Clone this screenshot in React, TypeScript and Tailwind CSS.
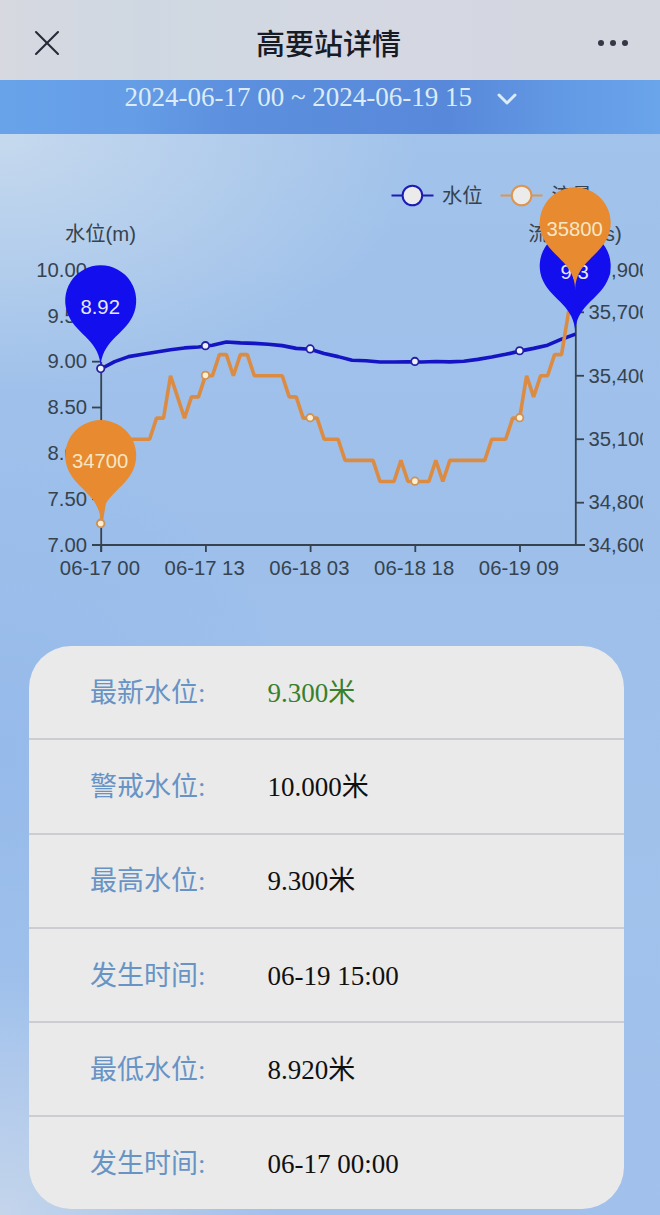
import React from 'react';
import { X, ChevronDown } from 'lucide-react';

// water level (m), one reading every two steps
const LEVELS = [
  8.92, 9.0, 9.055, 9.08, 9.105, 9.13, 9.15, 9.16, 9.18, 9.215, 9.205, 9.2,
  9.19, 9.175, 9.145, 9.135, 9.09, 9.055, 9.015, 9.01, 8.997, 8.997, 8.999, 8.997,
  9.002, 8.998, 9.005, 9.025, 9.05, 9.08, 9.115, 9.145, 9.18, 9.245, 9.3,
];

// flow (m³/s), one reading per step
const FLOWS = [
  34700, 34900, 35000, 35100, 35100, 35100, 35100, 35100, 35200, 35200, 35400, 35300,
  35200, 35300, 35300, 35400, 35400, 35500, 35500, 35400, 35500, 35500, 35400, 35400,
  35400, 35400, 35400, 35300, 35300, 35200, 35200, 35200, 35100, 35100, 35100, 35000,
  35000, 35000, 35000, 35000, 34900, 34900, 34900, 35000, 34900, 34900, 34900, 34900,
  35000, 34900, 35000, 35000, 35000, 35000, 35000, 35000, 35100, 35100, 35100, 35200,
  35200, 35400, 35300, 35400, 35400, 35500, 35500, 35700, 35800,
];

const X_LABELS = ['06-17 00', '06-17 13', '06-18 03', '06-18 18', '06-19 09'];
const LEFT_LABELS = ['7.00', '7.50', '8.00', '8.50', '9.00', '9.50', '10.00'];
const RIGHT_LABELS = [34600, 34800, 35100, 35400, 35700, 35900];

const ROWS = [
  { label: '最新水位:', value: '9.300米', green: true },
  { label: '警戒水位:', value: '10.000米' },
  { label: '最高水位:', value: '9.300米' },
  { label: '发生时间:', value: '06-19 15:00' },
  { label: '最低水位:', value: '8.920米' },
  { label: '发生时间:', value: '06-17 00:00' },
];

const LEFT = 100.7;
const RIGHT = 575.5;
const BOTTOM = 411;
const HEIGHT = 275;

const xAt = (i: number) => LEFT + (i * (RIGHT - LEFT)) / 68;
const levelY = (v: number) => BOTTOM - ((v - 7) / 3) * HEIGHT;
const flowY = (v: number) => BOTTOM - ((v - 34600) / 1300) * HEIGHT;

const Pin: React.FC<{ x: number; y: number; text: string; color: string; textColor: string }> = ({ x, y, text, color, textColor }) => {
  const r = 35.5;
  const h = 118.3;
  const dy = (r * r) / (h - r);
  const cy = y - h + r + dy;
  const sin = dy / r;
  const cos = Math.sqrt(1 - sin * sin);
  const dx = cos * r;
  const cp = r * 0.6;
  const cx = dx - sin * cp;
  const cpy = cy + dy + cos * cp;
  const tip = y - r * 0.76;
  const d = `M${x - dx} ${cy + dy} A${r} ${r} 0 1 1 ${x + dx} ${cy + dy} C${x + cx} ${cpy} ${x} ${tip} ${x} ${y} C${x} ${tip} ${x - cx} ${cpy} ${x - dx} ${cy + dy}Z`;
  return (
    <g>
      <path d={d} fill={color} />
      <text x={x - 0.5} y={y - 54.8} textAnchor="middle" fill={textColor}>{text}</text>
    </g>
  );
};

const Chart: React.FC = () => (
  <svg width="643" height="512" viewBox="0 0 643 512" className="block overflow-hidden font-['Liberation_Sans','Noto_Sans_CJK_SC',sans-serif] text-[20.3px]" fill="#36434f">
    {/* legend */}
    <g strokeWidth="2">
      <path d="M391.5 61.5H433.5" stroke="#1c1cb4" />
      <circle cx="412.4" cy="61.5" r="9.8" fill="#ebebec" stroke="#1c1cb4" />
      <path d="M500.5 61.5H542.5" stroke="#dc9550" />
      <circle cx="521.6" cy="61.5" r="9.8" fill="#ebebec" stroke="#dc9550" />
    </g>
    <text x="442" y="68.5">水位</text>
    <text x="551.5" y="68.5">流量</text>

    <text x="100.5" y="107" textAnchor="middle">水位(m)</text>
    <text x="575" y="107" textAnchor="middle">流量(m³/s)</text>

    {/* axes */}
    <g stroke="#36434f" strokeWidth="1.8">
      <path d="M101.2 228V418M575.8 160V411M92 411H585" fill="none" />
      {LEFT_LABELS.map((l, i) => (
        <path key={l} d={`M92 ${BOTTOM - (i * HEIGHT) / 6}H101`} />
      ))}
      {RIGHT_LABELS.map(v => (
        <path key={v} d={`M576 ${flowY(v)}H584`} />
      ))}
      {X_LABELS.map((l, i) => (
        <path key={l} d={`M${101.2 + i * 104.7} 411V418`} />
      ))}
    </g>
    {LEFT_LABELS.map((l, i) => (
      <text key={l} x="87" y={BOTTOM - (i * HEIGHT) / 6 + 6.8} textAnchor="end">{l}</text>
    ))}
    {RIGHT_LABELS.map(v => (
      <text key={v} x="588.5" y={flowY(v) + 6.8}>{v.toLocaleString('en-US')}</text>
    ))}
    {X_LABELS.map((l, i) => (
      <text key={l} x={99.9 + i * 104.75} y="441.3" textAnchor="middle">{l}</text>
    ))}

    {/* series */}
    <polyline points={LEVELS.map((v, i) => `${xAt(i * 2)},${levelY(v)}`).join(' ')} fill="none" stroke="#1414c4" strokeWidth="3.6" strokeLinejoin="round" />
    <polyline points={FLOWS.map((v, i) => `${xAt(i)},${flowY(v)}`).join(' ')} fill="none" stroke="#dc8c42" strokeWidth="3.6" strokeLinejoin="bevel" />

    {[0, 15, 30, 45, 60].map(i => (
      <circle key={i} cx={xAt(i)} cy={flowY(FLOWS[i]) - 0.4} r="3.7" fill="#fdeed2" stroke="#cf9256" strokeWidth="1.8" />
    ))}

    <Pin x={LEFT} y={levelY(8.92) - 0.7} text="8.92" color="#120eee" textColor="#e6e8fa" />
    <Pin x={RIGHT - 0.3} y={levelY(9.3) - 0.7} text="9.3" color="#120eee" textColor="#e6e8fa" />
    <Pin x={LEFT} y={flowY(34700) - 0.7} text="34700" color="#e78a30" textColor="#f6e6c4" />
    <Pin x={RIGHT - 0.3} y={flowY(35800) - 0.7} text="35800" color="#e78a30" textColor="#f6e6c4" />

    {[0, 15, 30, 45, 60].map(i => (
      <circle key={i} cx={xAt(i)} cy={(i % 2 ? (levelY(LEVELS[(i - 1) / 2]) + levelY(LEVELS[(i + 1) / 2])) / 2 : levelY(LEVELS[i / 2])) - 0.4} r="3.7" fill="#eef0fc" stroke="#2222a0" strokeWidth="1.8" />
    ))}
    <circle cx={LEFT} cy={flowY(34700) - 0.4} r="3.7" fill="#fdeed2" stroke="#cf9256" strokeWidth="1.8" />
  </svg>
);

export default function App() {
  return (
    <div className="flex h-[1215px] w-[660px] flex-col overflow-hidden bg-[radial-gradient(ellipse_420px_260px_at_0%_11%,#c6d9ee_0%,#c6d9ee00_100%),radial-gradient(ellipse_280px_240px_at_0%_100%,#c4d5eb_0%,#c4d5eb00_100%),radial-gradient(ellipse_300px_300px_at_0%_62%,#96baea_0%,#96baea00_100%),linear-gradient(to_bottom,#a3c4ea,#9dbfea_45%,#a0c2eb_75%,#a2c0ec)] font-['Liberation_Serif','Noto_Sans_CJK_SC',serif]">
      <header className="flex h-20 shrink-0 items-center justify-between bg-[linear-gradient(to_right,#d7d8e0,#cfd8e2_22%,#d4d8e2_50%,#d4d7e0)] pr-8 pl-[25px] pt-[5px]">
        <X className="h-11 w-11 text-[#262b38]" strokeWidth={1.15} />
        <h1 className="font-['Noto_Sans_CJK_SC',sans-serif] text-[29px] leading-none font-medium text-[#171b26]">高要站详情</h1>
        <div className="flex w-10 justify-end gap-1.5">
          <span className="size-1.5 shrink-0 rounded-full bg-[#343845]" />
          <span className="size-1.5 shrink-0 rounded-full bg-[#343845]" />
          <span className="size-1.5 shrink-0 rounded-full bg-[#343845]" />
        </div>
      </header>

      <div className="flex h-[54px] shrink-0 items-start bg-[linear-gradient(to_right,#68a3ea,#659de6_20%,#5c8fde_36%,#5888da_68%,#649ce6_88%,#6aa4ea)] pl-[124.5px] text-[27px] text-[#dcecf6]">
        <span className="mt-[3px] leading-[28px] whitespace-nowrap">2024-06-17 00 ~ 2024-06-19 15</span>
        <ChevronDown className="mt-[3px] ml-[19px] h-[32px] w-[32px]" strokeWidth={2.2} />
      </div>

      <div className="h-[512px] shrink-0">
        <Chart />
      </div>

      <div className="mr-9 ml-[29px] shrink-0 overflow-hidden rounded-[42px] bg-[#eaeaea]">
        {ROWS.map((row, i) => (
          <div key={i} className="flex h-[94.3px] items-center border-b-2 border-[#cccdd0] pt-[2px] pl-[61px] text-[27px] leading-none last:h-[92px] last:border-b-0">
            <span className="w-[177.5px] text-[#6893c5]">{row.label}</span>
            <span className={row.green ? 'text-[#37802c]' : 'text-[#101010]'}>{row.value}</span>
          </div>
        ))}
      </div>
    </div>
  );
}
